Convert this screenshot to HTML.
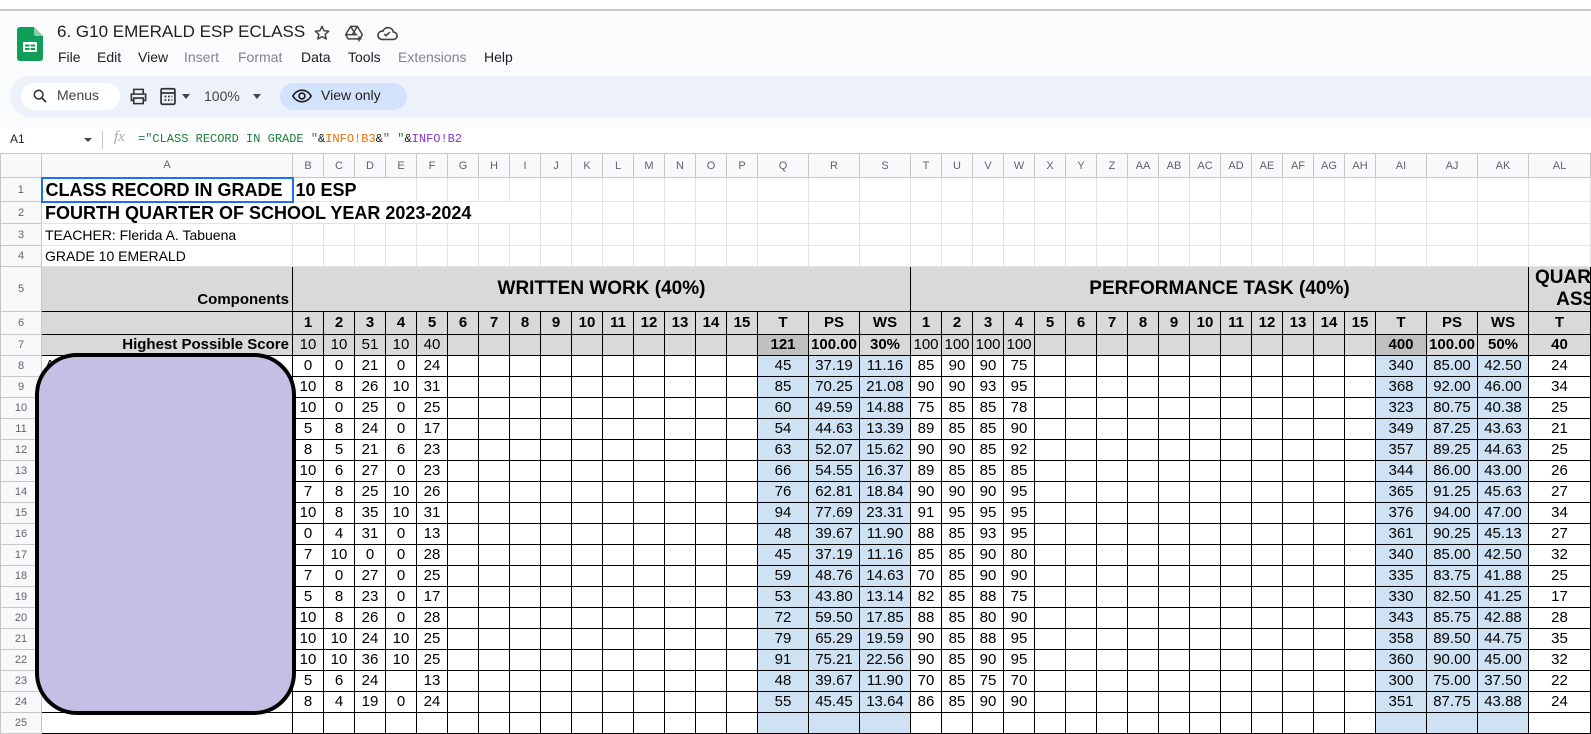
<!DOCTYPE html>
<html><head><meta charset="utf-8">
<style>
*{box-sizing:border-box;margin:0;padding:0}
body{width:1591px;height:712px;overflow:hidden;background:#fff;font-family:"Liberation Sans",Arial,sans-serif;position:relative}
.top{position:absolute;left:0;top:0;width:1591px;height:128px;background:#f9fbfd;border-top:9px solid #fff}
.top:before{content:"";position:absolute;left:0;top:0;width:100%;height:2px;background:#c8c8c8}
.abs{position:absolute;white-space:nowrap}
.menu span{position:absolute;font-size:14px;color:#202124;top:0}
.menu span.gr{color:#80868b}
.tb{position:absolute;left:10px;top:76px;width:1581px;height:41px;background:#edf2fa;border-radius:21px 0 0 21px}
.fb{position:absolute;left:0;top:128px;width:1591px;height:25px;background:#fff}
table{position:absolute;left:0;top:153px;border-collapse:collapse;table-layout:fixed;width:1590px}
td{border:1px solid #e2e3e3;font-size:15px;text-align:center;color:#000;overflow:hidden;white-space:nowrap;padding:0;line-height:18px;box-sizing:content-box}
td.h{background:#f8f9fa;color:#5f6368;font-size:11px;border-color:#c7c7c7}
tr.k td{border-color:#000}
tr.k td.h{border-color:#c7c7c7}
tr{height:21px}
.g{background:#d9d9d9}
.d{background:#c0c0c0;font-weight:bold}
.b{background:#cfe2f3}
.bo{font-weight:bold}
.t{text-align:left;padding-left:3px;font-weight:bold;font-size:18px}
</style></head><body>
<div class="top">
  <svg class="abs" style="left:17px;top:18px" width="26" height="34" viewBox="0 0 26 34"><path d="M3 0h14l9 9v22a3 3 0 0 1-3 3H3a3 3 0 0 1-3-3V3a3 3 0 0 1 3-3z" fill="#0f9d58"/><path d="M17 0l9 9h-7a2 2 0 0 1-2-2z" fill="#87ceac"/><rect x="6" y="15" width="14" height="10" rx="1" fill="#fff"/><rect x="8" y="17.5" width="4.5" height="2" fill="#0f9d58"/><rect x="13.5" y="17.5" width="4.5" height="2" fill="#0f9d58"/><rect x="8" y="21" width="4.5" height="2" fill="#0f9d58"/><rect x="13.5" y="21" width="4.5" height="2" fill="#0f9d58"/></svg>
  <div class="abs" style="left:57px;top:13px;font-size:17px;color:#1f1f1f">6. G10 EMERALD ESP ECLASS</div>
  <svg class="abs" style="left:313px;top:15px" width="18" height="18" viewBox="0 0 24 24"><path d="M12 3l2.7 6 6.3.6-4.8 4.2 1.4 6.2L12 16.8 6.4 20l1.4-6.2L3 9.6l6.3-.6z" fill="none" stroke="#444" stroke-width="2" stroke-linejoin="round"/></svg>
  <svg class="abs" style="left:344px;top:14px" width="20" height="20" viewBox="0 0 24 24"><path d="M8 4h8l6 10-3 5H5l-3-5z M8 4l6 10M16 4 10 14M2 14h14" fill="none" stroke="#444" stroke-width="1.8"/><path d="M18 16v6M15 19h6" stroke="#444" stroke-width="1.8"/></svg>
  <svg class="abs" style="left:376px;top:15px" width="22" height="18" viewBox="0 0 24 18"><path d="M6 16h13a4 4 0 0 0 0-8 6 6 0 0 0-11.5-1A4.5 4.5 0 0 0 6 16z" fill="none" stroke="#444" stroke-width="1.8"/><path d="M9 10l2 2 4-4" fill="none" stroke="#444" stroke-width="1.8"/></svg>
  <div class="menu abs" style="left:0;top:40px;width:600px;height:20px">
    <span style="left:58px">File</span><span style="left:97px">Edit</span><span style="left:138px">View</span><span class="gr" style="left:184px">Insert</span><span class="gr" style="left:238px">Format</span><span style="left:301px">Data</span><span style="left:348px">Tools</span><span class="gr" style="left:398px">Extensions</span><span style="left:484px">Help</span>
  </div>
</div>
<div class="tb">
  <div class="abs" style="left:11px;top:7px;width:99px;height:27px;background:#fff;border-radius:14px"></div>
  <svg class="abs" style="left:22px;top:12px" width="16" height="16" viewBox="0 0 24 24"><circle cx="10" cy="10" r="6.5" fill="none" stroke="#333" stroke-width="2.4"/><path d="M15 15l6 6" stroke="#333" stroke-width="2.6"/></svg>
  <div class="abs" style="left:47px;top:11px;font-size:14px;color:#444">Menus</div>
  <svg class="abs" style="left:119px;top:11px" width="19" height="19" viewBox="0 0 24 24"><path d="M6 8V3h12v5M6 17H3v-8h18v8h-3M6 14h12v7H6z" fill="none" stroke="#333" stroke-width="2"/></svg>
  <svg class="abs" style="left:149px;top:11px" width="18" height="19" viewBox="0 0 20 22"><rect x="2" y="2" width="16" height="18" rx="1.5" fill="none" stroke="#333" stroke-width="2"/><path d="M2 7h16M6 11h2M10 11h2M14 11h1M6 15h2M10 15h2M14 15h1" stroke="#333" stroke-width="2"/></svg>
  <div class="abs" style="left:172px;top:18px;border:4px solid transparent;border-top:5px solid #444"></div>
  <div class="abs" style="left:194px;top:12px;font-size:14px;color:#444">100%</div>
  <div class="abs" style="left:243px;top:18px;border:4px solid transparent;border-top:5px solid #444"></div>
  <div class="abs" style="left:270px;top:7px;width:127px;height:27px;background:#d3e3fd;border-radius:14px"></div>
  <svg class="abs" style="left:282px;top:12px" width="20" height="16" viewBox="0 0 24 18"><path d="M1 9c3-5 7-7 11-7s8 2 11 7c-3 5-7 7-11 7S4 14 1 9z" fill="none" stroke="#1f1f1f" stroke-width="2"/><circle cx="12" cy="9" r="3.5" fill="none" stroke="#1f1f1f" stroke-width="2"/></svg>
  <div class="abs" style="left:311px;top:11px;font-size:14px;color:#1f1f1f">View only</div>
</div>
<div class="fb">
  <div class="abs" style="left:10px;top:4px;font-size:12px;color:#1f1f1f">A1</div>
  <div class="abs" style="left:84px;top:10px;border:4px solid transparent;border-top:4px solid #444"></div>
  <div class="abs" style="left:102px;top:3px;width:1px;height:18px;background:#c7c7c7"></div>
  <div class="abs" style="left:114px;top:1px;font-size:15px;color:#aaa;font-style:italic;font-family:'Liberation Serif',serif">fx</div>
  <div class="abs" style="left:138px;top:4px;font-size:12px;font-family:'Liberation Mono',monospace;color:#188038">=<span>"CLASS RECORD IN GRADE "</span><span style="color:#202124">&amp;</span><span style="color:#e8710a">INFO!B3</span><span style="color:#202124">&amp;</span>" "<span style="color:#202124">&amp;</span><span style="color:#8430ce">INFO!B2</span></div>
</div>
<table>
<colgroup><col style="width:41px"><col style="width:251px">
<col style="width:31px"><col style="width:31px"><col style="width:31px"><col style="width:31px"><col style="width:31px"><col style="width:31px"><col style="width:31px"><col style="width:31px"><col style="width:31px"><col style="width:31px"><col style="width:31px"><col style="width:31px"><col style="width:31px"><col style="width:31px"><col style="width:31px">
<col style="width:51px"><col style="width:51px"><col style="width:51px">
<col style="width:31px"><col style="width:31px"><col style="width:31px"><col style="width:31px"><col style="width:31px"><col style="width:31px"><col style="width:31px"><col style="width:31px"><col style="width:31px"><col style="width:31px"><col style="width:31px"><col style="width:31px"><col style="width:31px"><col style="width:31px"><col style="width:31px">
<col style="width:51px"><col style="width:51px"><col style="width:51px"><col style="width:62px"></colgroup>
<tr style="height:24px"><td class="h"></td><td class="h">A</td><td class="h">B</td><td class="h">C</td><td class="h">D</td><td class="h">E</td><td class="h">F</td><td class="h">G</td><td class="h">H</td><td class="h">I</td><td class="h">J</td><td class="h">K</td><td class="h">L</td><td class="h">M</td><td class="h">N</td><td class="h">O</td><td class="h">P</td><td class="h">Q</td><td class="h">R</td><td class="h">S</td><td class="h">T</td><td class="h">U</td><td class="h">V</td><td class="h">W</td><td class="h">X</td><td class="h">Y</td><td class="h">Z</td><td class="h">AA</td><td class="h">AB</td><td class="h">AC</td><td class="h">AD</td><td class="h">AE</td><td class="h">AF</td><td class="h">AG</td><td class="h">AH</td><td class="h">AI</td><td class="h">AJ</td><td class="h">AK</td><td class="h">AL</td></tr>
<tr style="height:24px"><td class="h">1</td><td class="t" style="border:2px solid #1a73e8">CLASS RECORD IN GRADE</td><td class="t" colspan="4" style="padding-left:2px">10 ESP</td>
<td></td><td></td><td></td><td></td><td></td><td></td><td></td><td></td><td></td><td></td>
<td></td><td></td><td></td><td></td><td></td><td></td><td></td><td></td><td></td><td></td>
<td></td><td></td><td></td><td></td><td></td><td></td><td></td><td></td><td></td><td></td>
<td></td><td></td><td></td></tr>
<tr style="height:22px"><td class="h">2</td><td class="t" colspan="9">FOURTH QUARTER OF SCHOOL YEAR 2023-2024</td>
<td></td><td></td><td></td><td></td><td></td><td></td><td></td><td></td><td></td><td></td>
<td></td><td></td><td></td><td></td><td></td><td></td><td></td><td></td><td></td><td></td>
<td></td><td></td><td></td><td></td><td></td><td></td><td></td><td></td><td></td></tr>
<tr style="height:22px"><td class="h">3</td><td style="text-align:left;padding-left:3px;font-size:14px">TEACHER: Flerida A. Tabuena</td>
<td></td><td></td><td></td><td></td><td></td><td></td><td></td><td></td><td></td><td></td>
<td></td><td></td><td></td><td></td><td></td><td></td><td></td><td></td><td></td><td></td>
<td></td><td></td><td></td><td></td><td></td><td></td><td></td><td></td><td></td><td></td>
<td></td><td></td><td></td><td></td><td></td><td></td><td></td></tr>
<tr style="height:21px"><td class="h">4</td><td style="text-align:left;padding-left:3px;font-size:14px">GRADE 10 EMERALD</td>
<td></td><td></td><td></td><td></td><td></td><td></td><td></td><td></td><td></td><td></td>
<td></td><td></td><td></td><td></td><td></td><td></td><td></td><td></td><td></td><td></td>
<td></td><td></td><td></td><td></td><td></td><td></td><td></td><td></td><td></td><td></td>
<td></td><td></td><td></td><td></td><td></td><td></td><td></td></tr>
<tr class="k" style="height:43px"><td class="h">5</td><td class="g bo" style="text-align:right;vertical-align:bottom;padding:0 3px 2px 0">Components</td><td class="g bo" colspan="18" style="font-size:19px">WRITTEN WORK (40%)</td><td class="g bo" colspan="18" style="font-size:19px">PERFORMANCE TASK (40%)</td><td class="g bo" style="text-align:left;font-size:19px;line-height:22px;padding-left:6px;vertical-align:top">QUARTERLY<br>&nbsp;&nbsp;&nbsp;&nbsp;ASSESSMENT</td></tr>
<tr class="k" style="height:23px"><td class="h">6</td><td class="g"></td><td class="g bo">1</td><td class="g bo">2</td><td class="g bo">3</td><td class="g bo">4</td><td class="g bo">5</td><td class="g bo">6</td><td class="g bo">7</td><td class="g bo">8</td><td class="g bo">9</td><td class="g bo">10</td><td class="g bo">11</td><td class="g bo">12</td><td class="g bo">13</td><td class="g bo">14</td><td class="g bo">15</td><td class="g bo">T</td><td class="g bo">PS</td><td class="g bo">WS</td><td class="g bo">1</td><td class="g bo">2</td><td class="g bo">3</td><td class="g bo">4</td><td class="g bo">5</td><td class="g bo">6</td><td class="g bo">7</td><td class="g bo">8</td><td class="g bo">9</td><td class="g bo">10</td><td class="g bo">11</td><td class="g bo">12</td><td class="g bo">13</td><td class="g bo">14</td><td class="g bo">15</td><td class="g bo">T</td><td class="g bo">PS</td><td class="g bo">WS</td><td class="g bo">T</td></tr>
<tr class="k"><td class="h">7</td><td class="g bo" style="text-align:right;padding-right:3px">Highest Possible Score</td><td class="g">10</td><td class="g">10</td><td class="g">51</td><td class="g">10</td><td class="g">40</td><td class="g"></td><td class="g"></td><td class="g"></td><td class="g"></td><td class="g"></td><td class="g"></td><td class="g"></td><td class="g"></td><td class="g"></td><td class="g"></td><td class="d">121</td><td class="g bo">100.00</td><td class="g bo">30%</td><td class="g">100</td><td class="g">100</td><td class="g">100</td><td class="g">100</td><td class="g"></td><td class="g"></td><td class="g"></td><td class="g"></td><td class="g"></td><td class="g"></td><td class="g"></td><td class="g"></td><td class="g"></td><td class="g"></td><td class="g"></td><td class="d">400</td><td class="g bo">100.00</td><td class="g bo">50%</td><td class="g bo">40</td></tr>
<tr class="k"><td class="h">8</td><td style="text-align:left;padding-left:3px">A</td><td>0</td><td>0</td><td>21</td><td>0</td><td>24</td><td></td><td></td><td></td><td></td><td></td><td></td><td></td><td></td><td></td><td></td><td class="b">45</td><td class="b">37.19</td><td class="b">11.16</td><td>85</td><td>90</td><td>90</td><td>75</td><td></td><td></td><td></td><td></td><td></td><td></td><td></td><td></td><td></td><td></td><td></td><td class="b">340</td><td class="b">85.00</td><td class="b">42.50</td><td>24</td></tr>
<tr class="k"><td class="h">9</td><td></td><td>10</td><td>8</td><td>26</td><td>10</td><td>31</td><td></td><td></td><td></td><td></td><td></td><td></td><td></td><td></td><td></td><td></td><td class="b">85</td><td class="b">70.25</td><td class="b">21.08</td><td>90</td><td>90</td><td>93</td><td>95</td><td></td><td></td><td></td><td></td><td></td><td></td><td></td><td></td><td></td><td></td><td></td><td class="b">368</td><td class="b">92.00</td><td class="b">46.00</td><td>34</td></tr>
<tr class="k"><td class="h">10</td><td></td><td>10</td><td>0</td><td>25</td><td>0</td><td>25</td><td></td><td></td><td></td><td></td><td></td><td></td><td></td><td></td><td></td><td></td><td class="b">60</td><td class="b">49.59</td><td class="b">14.88</td><td>75</td><td>85</td><td>85</td><td>78</td><td></td><td></td><td></td><td></td><td></td><td></td><td></td><td></td><td></td><td></td><td></td><td class="b">323</td><td class="b">80.75</td><td class="b">40.38</td><td>25</td></tr>
<tr class="k"><td class="h">11</td><td></td><td>5</td><td>8</td><td>24</td><td>0</td><td>17</td><td></td><td></td><td></td><td></td><td></td><td></td><td></td><td></td><td></td><td></td><td class="b">54</td><td class="b">44.63</td><td class="b">13.39</td><td>89</td><td>85</td><td>85</td><td>90</td><td></td><td></td><td></td><td></td><td></td><td></td><td></td><td></td><td></td><td></td><td></td><td class="b">349</td><td class="b">87.25</td><td class="b">43.63</td><td>21</td></tr>
<tr class="k"><td class="h">12</td><td></td><td>8</td><td>5</td><td>21</td><td>6</td><td>23</td><td></td><td></td><td></td><td></td><td></td><td></td><td></td><td></td><td></td><td></td><td class="b">63</td><td class="b">52.07</td><td class="b">15.62</td><td>90</td><td>90</td><td>85</td><td>92</td><td></td><td></td><td></td><td></td><td></td><td></td><td></td><td></td><td></td><td></td><td></td><td class="b">357</td><td class="b">89.25</td><td class="b">44.63</td><td>25</td></tr>
<tr class="k"><td class="h">13</td><td></td><td>10</td><td>6</td><td>27</td><td>0</td><td>23</td><td></td><td></td><td></td><td></td><td></td><td></td><td></td><td></td><td></td><td></td><td class="b">66</td><td class="b">54.55</td><td class="b">16.37</td><td>89</td><td>85</td><td>85</td><td>85</td><td></td><td></td><td></td><td></td><td></td><td></td><td></td><td></td><td></td><td></td><td></td><td class="b">344</td><td class="b">86.00</td><td class="b">43.00</td><td>26</td></tr>
<tr class="k"><td class="h">14</td><td></td><td>7</td><td>8</td><td>25</td><td>10</td><td>26</td><td></td><td></td><td></td><td></td><td></td><td></td><td></td><td></td><td></td><td></td><td class="b">76</td><td class="b">62.81</td><td class="b">18.84</td><td>90</td><td>90</td><td>90</td><td>95</td><td></td><td></td><td></td><td></td><td></td><td></td><td></td><td></td><td></td><td></td><td></td><td class="b">365</td><td class="b">91.25</td><td class="b">45.63</td><td>27</td></tr>
<tr class="k"><td class="h">15</td><td></td><td>10</td><td>8</td><td>35</td><td>10</td><td>31</td><td></td><td></td><td></td><td></td><td></td><td></td><td></td><td></td><td></td><td></td><td class="b">94</td><td class="b">77.69</td><td class="b">23.31</td><td>91</td><td>95</td><td>95</td><td>95</td><td></td><td></td><td></td><td></td><td></td><td></td><td></td><td></td><td></td><td></td><td></td><td class="b">376</td><td class="b">94.00</td><td class="b">47.00</td><td>34</td></tr>
<tr class="k"><td class="h">16</td><td></td><td>0</td><td>4</td><td>31</td><td>0</td><td>13</td><td></td><td></td><td></td><td></td><td></td><td></td><td></td><td></td><td></td><td></td><td class="b">48</td><td class="b">39.67</td><td class="b">11.90</td><td>88</td><td>85</td><td>93</td><td>95</td><td></td><td></td><td></td><td></td><td></td><td></td><td></td><td></td><td></td><td></td><td></td><td class="b">361</td><td class="b">90.25</td><td class="b">45.13</td><td>27</td></tr>
<tr class="k"><td class="h">17</td><td></td><td>7</td><td>10</td><td>0</td><td>0</td><td>28</td><td></td><td></td><td></td><td></td><td></td><td></td><td></td><td></td><td></td><td></td><td class="b">45</td><td class="b">37.19</td><td class="b">11.16</td><td>85</td><td>85</td><td>90</td><td>80</td><td></td><td></td><td></td><td></td><td></td><td></td><td></td><td></td><td></td><td></td><td></td><td class="b">340</td><td class="b">85.00</td><td class="b">42.50</td><td>32</td></tr>
<tr class="k"><td class="h">18</td><td></td><td>7</td><td>0</td><td>27</td><td>0</td><td>25</td><td></td><td></td><td></td><td></td><td></td><td></td><td></td><td></td><td></td><td></td><td class="b">59</td><td class="b">48.76</td><td class="b">14.63</td><td>70</td><td>85</td><td>90</td><td>90</td><td></td><td></td><td></td><td></td><td></td><td></td><td></td><td></td><td></td><td></td><td></td><td class="b">335</td><td class="b">83.75</td><td class="b">41.88</td><td>25</td></tr>
<tr class="k"><td class="h">19</td><td></td><td>5</td><td>8</td><td>23</td><td>0</td><td>17</td><td></td><td></td><td></td><td></td><td></td><td></td><td></td><td></td><td></td><td></td><td class="b">53</td><td class="b">43.80</td><td class="b">13.14</td><td>82</td><td>85</td><td>88</td><td>75</td><td></td><td></td><td></td><td></td><td></td><td></td><td></td><td></td><td></td><td></td><td></td><td class="b">330</td><td class="b">82.50</td><td class="b">41.25</td><td>17</td></tr>
<tr class="k"><td class="h">20</td><td></td><td>10</td><td>8</td><td>26</td><td>0</td><td>28</td><td></td><td></td><td></td><td></td><td></td><td></td><td></td><td></td><td></td><td></td><td class="b">72</td><td class="b">59.50</td><td class="b">17.85</td><td>88</td><td>85</td><td>80</td><td>90</td><td></td><td></td><td></td><td></td><td></td><td></td><td></td><td></td><td></td><td></td><td></td><td class="b">343</td><td class="b">85.75</td><td class="b">42.88</td><td>28</td></tr>
<tr class="k"><td class="h">21</td><td></td><td>10</td><td>10</td><td>24</td><td>10</td><td>25</td><td></td><td></td><td></td><td></td><td></td><td></td><td></td><td></td><td></td><td></td><td class="b">79</td><td class="b">65.29</td><td class="b">19.59</td><td>90</td><td>85</td><td>88</td><td>95</td><td></td><td></td><td></td><td></td><td></td><td></td><td></td><td></td><td></td><td></td><td></td><td class="b">358</td><td class="b">89.50</td><td class="b">44.75</td><td>35</td></tr>
<tr class="k"><td class="h">22</td><td></td><td>10</td><td>10</td><td>36</td><td>10</td><td>25</td><td></td><td></td><td></td><td></td><td></td><td></td><td></td><td></td><td></td><td></td><td class="b">91</td><td class="b">75.21</td><td class="b">22.56</td><td>90</td><td>85</td><td>90</td><td>95</td><td></td><td></td><td></td><td></td><td></td><td></td><td></td><td></td><td></td><td></td><td></td><td class="b">360</td><td class="b">90.00</td><td class="b">45.00</td><td>32</td></tr>
<tr class="k"><td class="h">23</td><td></td><td>5</td><td>6</td><td>24</td><td></td><td>13</td><td></td><td></td><td></td><td></td><td></td><td></td><td></td><td></td><td></td><td></td><td class="b">48</td><td class="b">39.67</td><td class="b">11.90</td><td>70</td><td>85</td><td>75</td><td>70</td><td></td><td></td><td></td><td></td><td></td><td></td><td></td><td></td><td></td><td></td><td></td><td class="b">300</td><td class="b">75.00</td><td class="b">37.50</td><td>22</td></tr>
<tr class="k"><td class="h">24</td><td></td><td>8</td><td>4</td><td>19</td><td>0</td><td>24</td><td></td><td></td><td></td><td></td><td></td><td></td><td></td><td></td><td></td><td></td><td class="b">55</td><td class="b">45.45</td><td class="b">13.64</td><td>86</td><td>85</td><td>90</td><td>90</td><td></td><td></td><td></td><td></td><td></td><td></td><td></td><td></td><td></td><td></td><td></td><td class="b">351</td><td class="b">87.75</td><td class="b">43.88</td><td>24</td></tr>
<tr class="k"><td class="h">25</td><td></td><td></td><td></td><td></td><td></td><td></td><td></td><td></td><td></td><td></td><td></td><td></td><td></td><td></td><td></td><td></td><td class="b"></td><td class="b"></td><td class="b"></td><td></td><td></td><td></td><td></td><td></td><td></td><td></td><td></td><td></td><td></td><td></td><td></td><td></td><td></td><td></td><td class="b"></td><td class="b"></td><td class="b"></td><td></td></tr>
</table>
<div class="abs" style="left:35px;top:353px;width:261px;height:362px;background:#c5bfe6;border:4px solid #000;border-radius:42px"></div>
</body></html>
